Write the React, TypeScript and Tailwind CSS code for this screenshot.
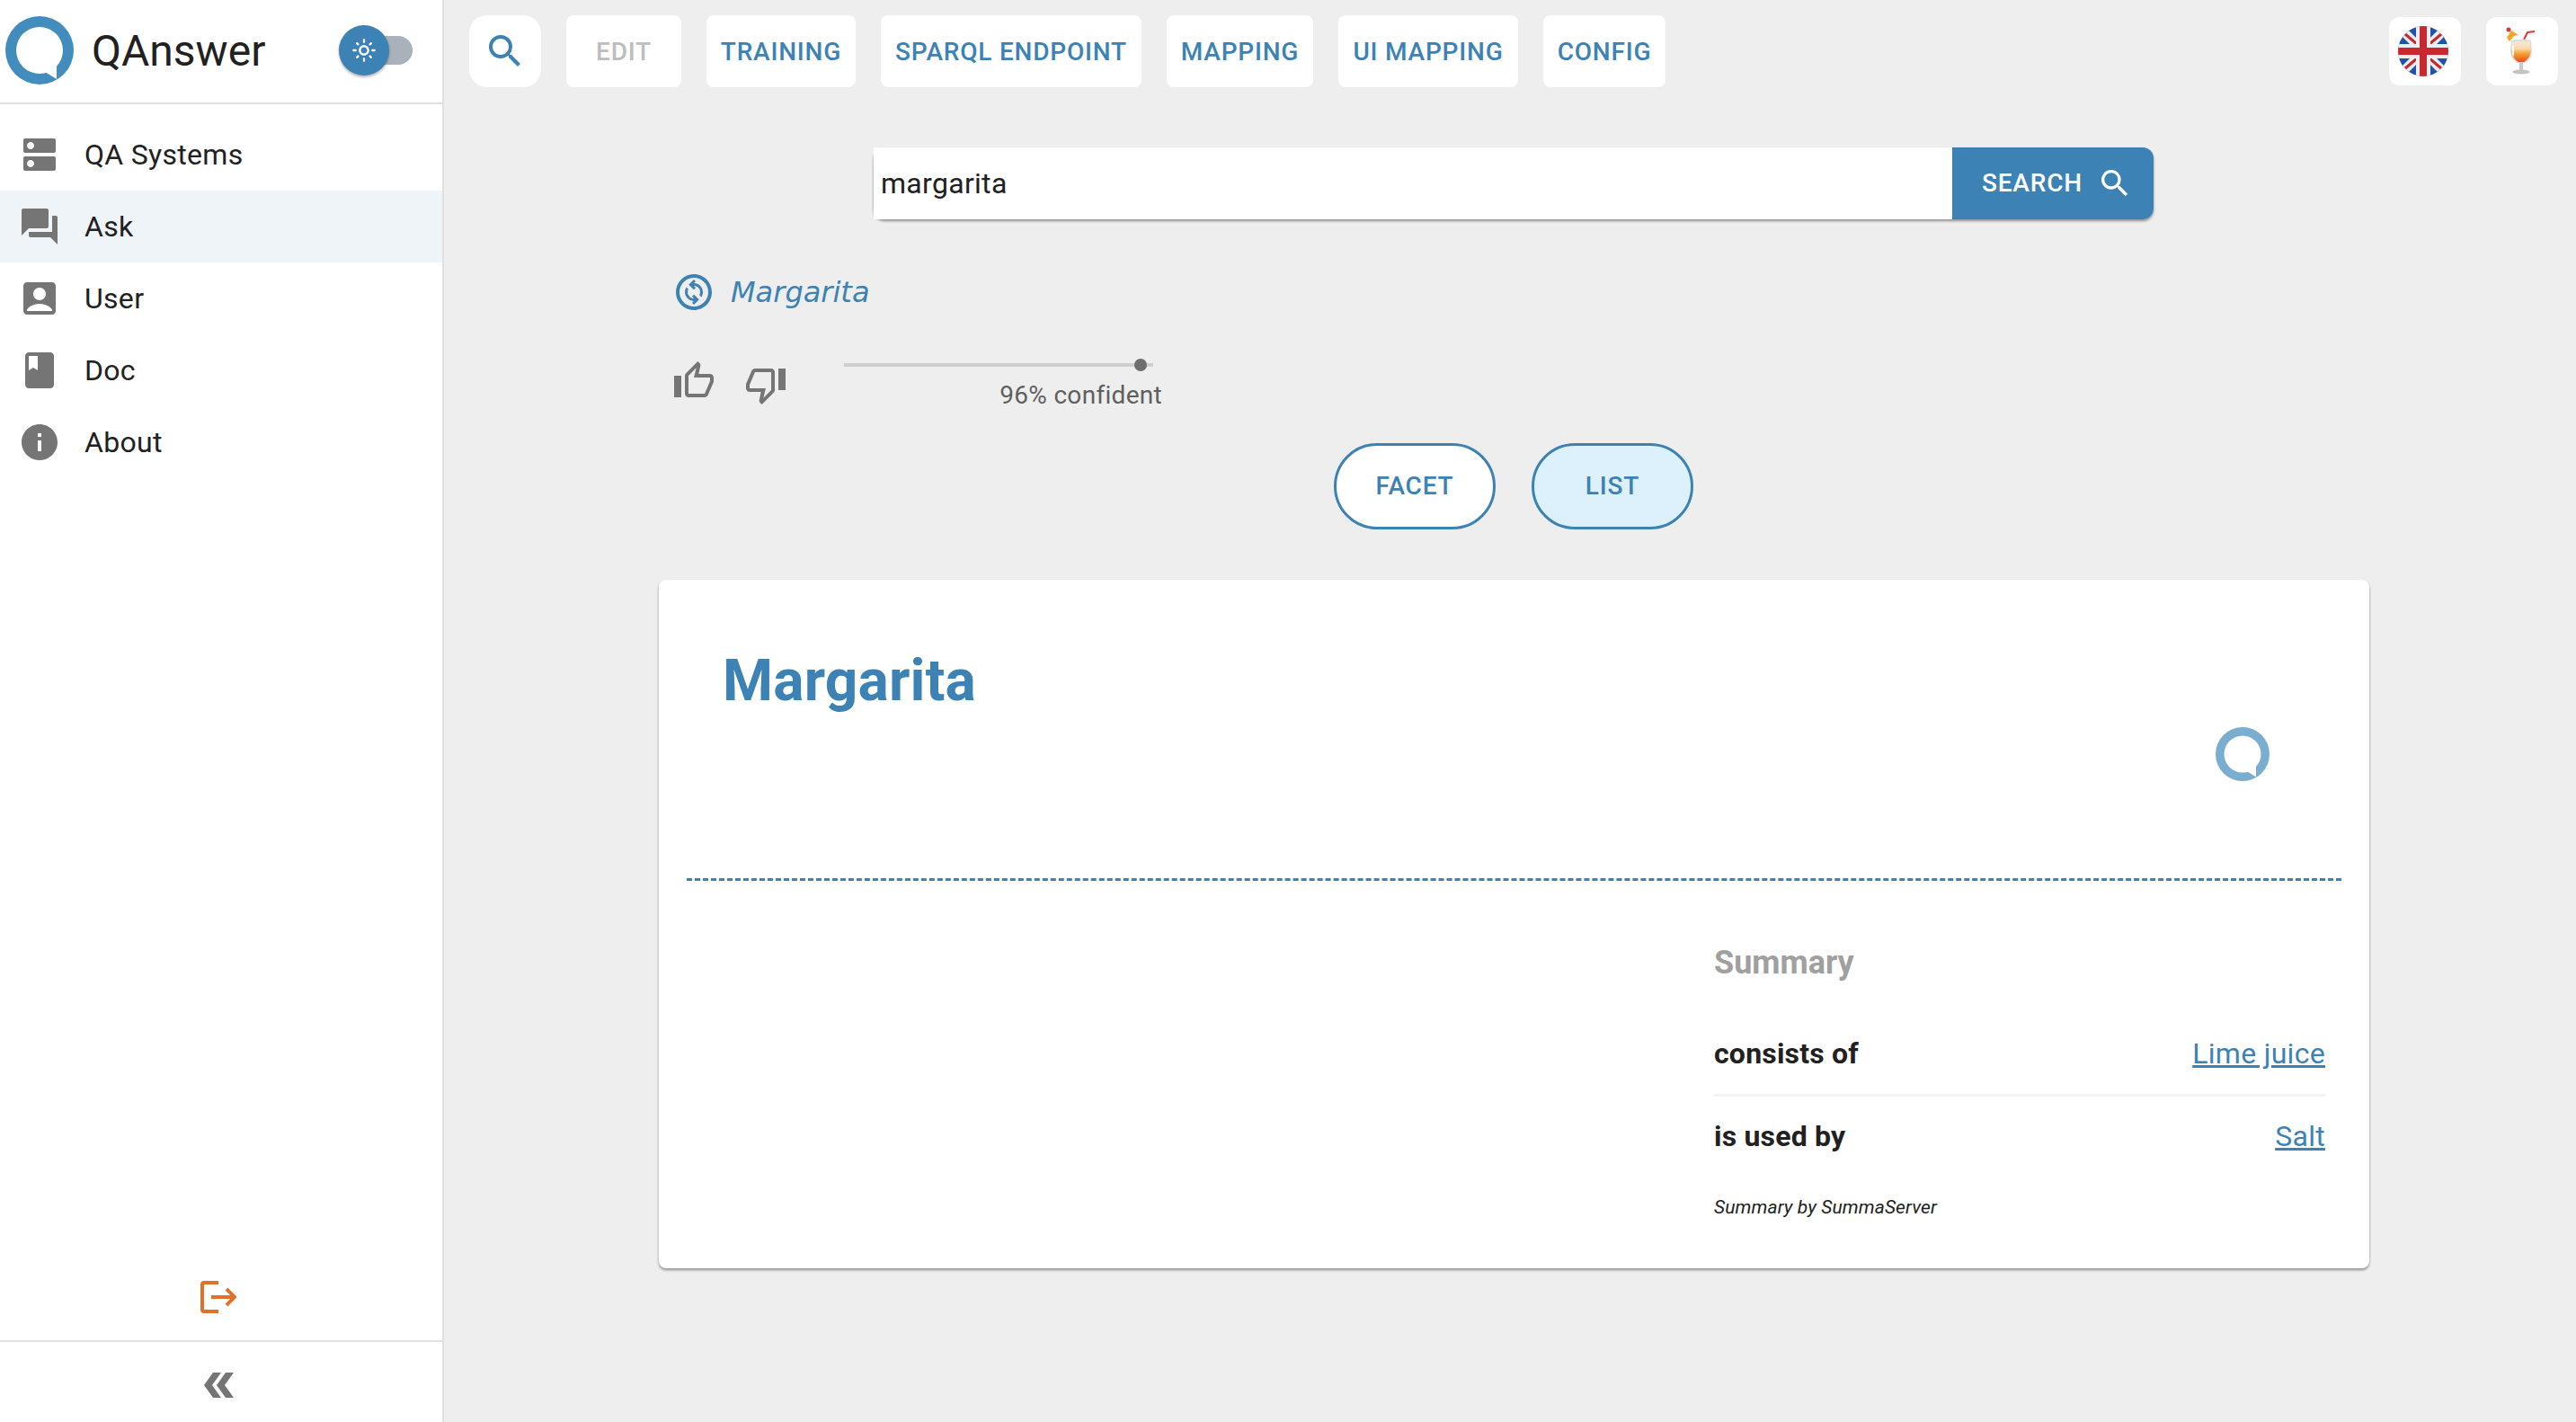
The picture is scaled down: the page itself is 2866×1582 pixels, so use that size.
import {
  MdAccountBox,
  MdBook,
  MdDns,
  MdForum,
  MdInfo,
  MdOutlineChangeCircle,
  MdOutlineLightMode,
  MdOutlineThumbDown,
  MdOutlineThumbUp,
  MdSearch,
} from "react-icons/md";

const font = "font-['Roboto',sans-serif]";

const menuItems = [
  { label: "QA Systems", icon: MdDns },
  { label: "Ask", icon: MdForum, active: true },
  { label: "User", icon: MdAccountBox },
  { label: "Doc", icon: MdBook },
  { label: "About", icon: MdInfo },
];

const navItems = [
  { label: "EDIT", width: "w-[128px]", disabled: true },
  { label: "TRAINING", width: "w-[166px]" },
  { label: "SPARQL ENDPOINT", width: "w-[290px]" },
  { label: "MAPPING", width: "w-[163px]" },
  { label: "UI MAPPING", width: "w-[200px]" },
  { label: "CONFIG", width: "w-[136px]" },
];

const Logo = ({ className }: { className: string }) => (
  <svg viewBox="0 0 76 76" className={className}>
    <circle cx="38" cy="38" r="38" fill="#428dbd" />
    <circle cx="38" cy="38" r="26" fill="#fff" />
    <path d="M44 62 L57 70 L57 52 Z" fill="#fff" />
  </svg>
);

const Flag = () => (
  <svg viewBox="0 0 56 56" className="w-[56px] h-[56px] mr-[4px]">
    <defs>
      <clipPath id="flag-circle">
        <circle cx="28" cy="28" r="28" />
      </clipPath>
    </defs>
    <g clipPath="url(#flag-circle)">
      <rect width="56" height="56" fill="#2153ab" />
      <path d="M0 0 L56 56 M56 0 L0 56" stroke="#eeeeee" strokeWidth="10" />
      <path d="M8 9 L21 20 M48 47 L35 36 M48 9 L35 20 M8 47 L21 36" stroke="#c8282f" strokeWidth="3" />
      <rect x="20" width="16" height="56" fill="#eeeeee" />
      <rect y="20" width="56" height="16" fill="#eeeeee" />
      <rect x="24" width="8" height="56" fill="#c8282f" />
      <rect y="24" width="56" height="8" fill="#c8282f" />
    </g>
  </svg>
);

const Cocktail = () => (
  <svg viewBox="0 0 50 70" className="w-[50px] h-[70px] mr-[2px] mb-[4px]">
    <defs>
      <linearGradient id="drink" x1="0" y1="0" x2="0" y2="1">
        <stop offset="0" stopColor="#fbe8d2" />
        <stop offset="0.35" stopColor="#f9d9ae" />
        <stop offset="0.6" stopColor="#f6a02f" />
        <stop offset="1" stopColor="#ea4a1e" />
      </linearGradient>
    </defs>
    <path d="M28 24 L32 16 L40 15" stroke="#df3b36" strokeWidth="2" fill="none" />
    <path d="M9 22 L14 14 L22 19 L17 20 L12 26 Z" fill="#f6a623" />
    <circle cx="11" cy="13" r="2.5" fill="#d93838" />
    <path d="M14 25 Q25 22 36 25 L37 36 Q37 46 29 50 H21 Q13 46 13 36 Z" fill="#dedede" />
    <path d="M15 27 Q25 25 35 27 L36 36 Q35 45 28 49 H22 Q15 45 14 36 Z" fill="url(#drink)" />
    <path d="M15 30 L15 40 L17 43 L17 31 Z" fill="#ffffff" />
    <rect x="23" y="50" width="4" height="8" fill="#c9c9c9" />
    <ellipse cx="25" cy="60" rx="9.5" ry="2.6" fill="#c2c2c2" />
  </svg>
);

const ToolButton = ({ label, width, disabled }: { label: string; width: string; disabled?: boolean }) => (
  <button
    className={`${width} h-[80px] pt-[1px] rounded-lg bg-white text-[28px] font-medium tracking-[0.8px] flex items-center justify-center ${
      disabled ? "text-[#bdbdbd]" : "text-[#3d82b4]"
    }`}
  >
    {label}
  </button>
);

const Sidebar = () => (
  <aside className="w-[494px] shrink-0 h-full bg-white border-r-2 border-[#e0e0e0] flex flex-col">
    <div className="h-[116px] shrink-0 border-b-2 border-[#e0e0e0] pl-[6px] flex items-center">
      <Logo className="w-[76px] h-[76px] shrink-0 mt-[-2px]" />
      <span className="ml-[20px] text-[48px] leading-none text-[#212121]">QAnswer</span>
      <div className="relative ml-[82px] w-[82px] h-[56px] flex items-center justify-end mt-[-2px]">
        <div className="w-[68px] h-[32px] rounded-full bg-[#a9b1bb]" />
        <div className="absolute left-0 top-0 w-[56px] h-[56px] rounded-full bg-[#3d82b4] shadow-[0_2px_3px_rgba(0,0,0,0.3)] flex items-center justify-center">
          <MdOutlineLightMode className="text-white w-[28px] h-[28px]" />
        </div>
      </div>
    </div>
    <nav className="pt-[16px] flex flex-col">
      {menuItems.map((item) => (
        <div
          key={item.label}
          className={`h-[80px] pl-[20px] flex items-center ${item.active ? "bg-[#eff4f8]" : ""}`}
        >
          <item.icon className="w-[48px] h-[48px] text-[#757575] shrink-0" />
          <span className="ml-[26px] text-[32px] text-[#212121] tracking-[0.3px]">{item.label}</span>
        </div>
      ))}
    </nav>
    <div className="mt-auto h-[66px] flex justify-center">
      <svg viewBox="0 0 40 36" fill="none" className="w-[40px] h-[36px] ml-[-6px]">
        <path d="M20 2 H4 Q2 2 2 4 V32 Q2 34 4 34 H20" stroke="#e0702a" strokeWidth="4" />
        <path d="M12 18 H37 M29 9 L38 18 L29 27" stroke="#e0702a" strokeWidth="4" />
      </svg>
    </div>
    <div className="h-[91px] shrink-0 border-t-2 border-[#e0e0e0] pt-[34px] flex justify-center">
      <svg viewBox="0 0 33 28" className="w-[33px] h-[28px] ml-[-5px]">
        <path d="M0 14 L10 0 H19 L9 14 L19 28 H10 Z M14 14 L24 0 H33 L23 14 L33 28 H24 Z" fill="#757575" />
      </svg>
    </div>
  </aside>
);

const Toolbar = () => (
  <div className="h-[97px] flex pt-[17px] pl-[28px] pr-[20px]">
    <button className="w-[80px] h-[80px] rounded-[20px] bg-white flex items-center justify-center">
      <MdSearch className="w-[48px] h-[48px] text-[#3d82b4]" />
    </button>
    <div className="ml-[28px] flex gap-[28px]">
      {navItems.map((item) => (
        <ToolButton key={item.label} {...item} />
      ))}
    </div>
    <div className="ml-auto flex gap-[28px] pt-[2px]">
      <div className="w-[80px] h-[76px] rounded-xl bg-white flex items-center justify-center">
        <Flag />
      </div>
      <div className="w-[80px] h-[76px] rounded-xl bg-white flex items-center justify-center">
        <Cocktail />
      </div>
    </div>
  </div>
);

const SummaryRow = ({ label, value }: { label: string; value: string }) => (
  <div className="flex items-center justify-between">
    <span className="text-[32px] font-bold tracking-[0.2px] text-[#212121]">{label}</span>
    <a className="text-[32px] tracking-[0.3px] text-[#3d82b4] underline">{value}</a>
  </div>
);

const ResultCard = () => (
  <div className="mt-[56px] ml-[239px] w-[1903px] h-[766px] bg-white rounded-lg shadow-[0_2px_3px_rgba(0,0,0,0.4)] flex flex-col">
    <div className="h-[335px] shrink-0 mx-[31px] border-b-[3px] border-dashed border-[#3d82b4] flex justify-between">
      <h1 className="ml-[40px] mt-[74px] text-[64px] leading-[78px] font-bold tracking-[0.2px] text-[#3d82b4] h-fit">Margarita</h1>
      <Logo className="w-[60px] h-[60px] opacity-70 mt-[164px] mr-[80px]" />
    </div>
    <div className="ml-[1174px] mr-[49px] pt-[68px] flex flex-col">
      <div className="text-[36px] leading-[46px] font-bold text-[#a0a0a0]">Summary</div>
      <div className="mt-[54px]">
        <SummaryRow label="consists of" value="Lime juice" />
      </div>
      <div className="mt-[21px] h-[3px] bg-[#f3f3f3]" />
      <div className="mt-[20px]">
        <SummaryRow label="is used by" value="Salt" />
      </div>
      <div className="mt-[40px] text-[21px] italic tracking-[0.1px] text-[#212121]">Summary by SummaServer</div>
    </div>
  </div>
);

export default function App() {
  return (
    <div className={`${font} w-[2866px] h-[1582px] flex bg-[#eeeeee] overflow-hidden`}>
      <Sidebar />
      <main className="flex-1 min-w-0 flex flex-col">
        <Toolbar />
        <div className="mt-[67px] ml-[478px] w-[1424px] h-[80px] flex rounded-xl shadow-[0_2px_3px_rgba(0,0,0,0.4)]">
          <div className="flex-1 bg-white flex items-center pl-[8px] text-[32px] tracking-[0.3px] text-[#212121]">margarita</div>
          <button className="w-[224px] bg-[#3d82b4] rounded-r-xl text-white text-[28px] font-medium tracking-[0.8px] flex items-center pl-[33px] gap-[16px]">
            SEARCH
            <MdSearch className="w-[40px] h-[40px]" />
          </button>
        </div>
        <div className="mt-[57px] ml-[254px] flex items-center">
          <MdOutlineChangeCircle className="w-[48px] h-[48px] text-[#3d82b4]" />
          <span className="ml-[17px] text-[32px] italic text-[#3d82b4] font-['DejaVu_Sans',sans-serif]">Margarita</span>
        </div>
        <div className="mt-[47px] ml-[254px] flex">
          <MdOutlineThumbUp className="w-[48px] h-[48px] text-[#757575] mt-[4px]" />
          <MdOutlineThumbDown className="ml-[32px] w-[48px] h-[48px] text-[#757575] mt-[8px]" />
          <div className="ml-[63px] w-[354px] flex flex-col items-end">
            <div className="relative w-[344px] h-[4px] bg-[#cfcfcf] mt-[8px] mr-[10px]">
              <div className="absolute right-[7px] top-[-5px] w-[14px] h-[14px] rounded-full bg-[#6e6e6e]" />
            </div>
            <span className="mt-[14px] text-[28px] leading-[36px] tracking-[0.3px] text-[#5f5f5f]">96% confident</span>
          </div>
        </div>
        <div className="mt-[35px] ml-[990px] flex gap-[40px]">
          <button className="w-[180px] h-[96px] rounded-[48px] border-[3px] border-[#3d82b4] bg-white text-[28px] font-medium tracking-[0.8px] text-[#3d82b4]">
            FACET
          </button>
          <button className="w-[180px] h-[96px] rounded-[48px] border-[3px] border-[#3d82b4] bg-[#ddf1fd] text-[28px] font-medium tracking-[0.8px] text-[#3d82b4]">
            LIST
          </button>
        </div>
        <ResultCard />
      </main>
    </div>
  );
}
